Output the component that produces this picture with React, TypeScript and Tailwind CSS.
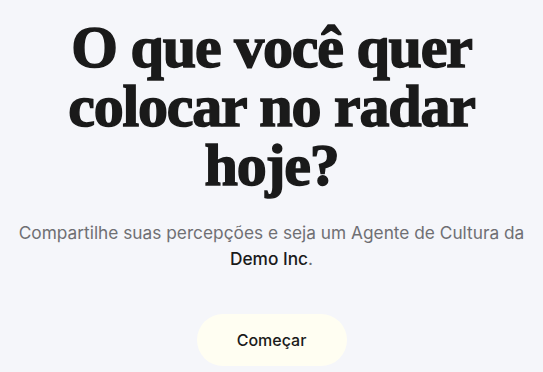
export default function App() {
  return (
    <div className="min-h-screen bg-[#f5f6fa] flex flex-col items-center pt-[18px] px-4">
      <h1 className="text-center text-[60px] leading-[59px] font-bold tracking-[-0.02em] text-[#1a1a1a] [-webkit-text-stroke:1.5px_#1a1a1a] max-w-[500px] font-['Liberation_Serif',serif]">
        O que você quer colocar no radar hoje?
      </h1>
      <p className="mt-[25px] text-center text-[17.3px] leading-[26px] text-[#6f6f73] font-['Inter',sans-serif]">
        Compartilhe suas percepções e seja um Agente de Cultura da{" "}
        <span className="font-medium text-[#1a1a1a]">Demo Inc</span>.
      </p>
      <button className="mt-[42px] w-[150px] h-[52px] rounded-full bg-[#fffef2] text-[16px] font-medium text-[#1a1a1a] font-['Inter',sans-serif]">
        Começar
      </button>
    </div>
  );
}
